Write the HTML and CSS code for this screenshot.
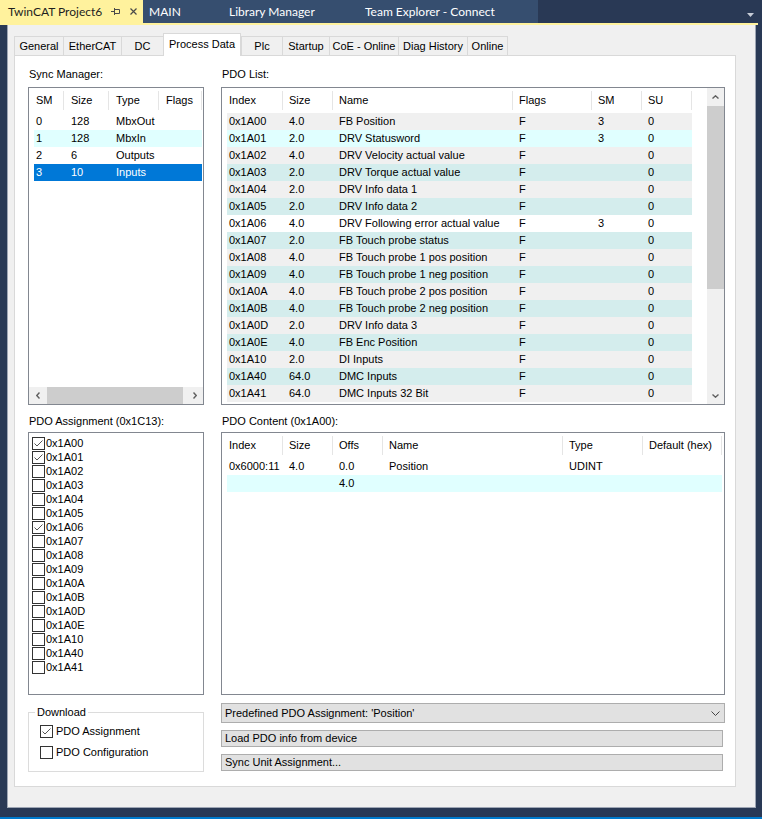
FILE: index.html
```html
<!DOCTYPE html>
<html>
<head>
<meta charset="utf-8">
<title>TwinCAT Project6</title>
<link rel="stylesheet" href="styles.css">
</head>
<body>
<div class="app">
  <div class="doctabs">
    <div class="dtab dtab-active">
      <span class="dtab-title">TwinCAT Project6</span>
      <svg class="pin" width="9" height="7" viewBox="0 0 9 7"><path d="M0 3.5H3M3.5 0V7M4 1.5H8.5V5.5H4" fill="none" stroke="#4a4a4a" stroke-width="1"/></svg>
      <svg class="close" width="7" height="7" viewBox="0 0 7 7"><path d="M0.5 0.5L6.5 6.5M6.5 0.5L0.5 6.5" fill="none" stroke="#4a4a4a" stroke-width="1.2"/></svg>
    </div>
    <div class="dtab dtab-main">MAIN</div>
    <div class="dtab dtab-lib">Library Manager</div>
    <div class="dtab dtab-team">Team Explorer - Connect</div>
    <div class="dtab-fill"></div>
    <svg class="dtab-menu" width="7" height="4" viewBox="0 0 7 4"><path d="M0 0H7L3.5 4Z" fill="#c6ccd6"/></svg>
  </div>
  <div class="docline"></div>
  <div class="frame">
    <div class="tabs">
      <div class="tab t-general">General</div>
      <div class="tab t-ethercat">EtherCAT</div>
      <div class="tab t-dc">DC</div>
      <div class="tab tab-active t-process">Process Data</div>
      <div class="tab t-plc">Plc</div>
      <div class="tab t-startup">Startup</div>
      <div class="tab t-coe">CoE - Online</div>
      <div class="tab t-diag">Diag History</div>
      <div class="tab tab-last t-online">Online</div>
    </div>
    <div class="panel">
      <div class="col col-left">
        <div class="lbl">Sync Manager:</div>
        <div class="box box-top box-col">
          <div class="lv sync">
            <div class="hdr g-sync">
              <span class="hc">SM</span><span class="hc">Size</span><span class="hc">Type</span><span class="hc">Flags</span>
            </div>
            <div class="row g-sync"><span>0</span><span>128</span><span>MbxOut</span><span></span></div>
            <div class="row g-sync r-cyan"><span>1</span><span>128</span><span>MbxIn</span><span></span></div>
            <div class="row g-sync"><span>2</span><span>6</span><span>Outputs</span><span></span></div>
            <div class="row g-sync r-sel"><span>3</span><span>10</span><span>Inputs</span><span></span></div>
          </div>
          <div class="hscroll">
            <div class="sb-btn"><svg width="4" height="7" viewBox="0 0 4 7"><path d="M3.5 0.5L0.8 3.5L3.5 6.5" fill="none" stroke="#606060" stroke-width="1.4"/></svg></div>
            <div class="hthumb"></div>
            <div class="sb-track"></div>
            <div class="sb-btn"><svg width="4" height="7" viewBox="0 0 4 7"><path d="M0.5 0.5L3.2 3.5L0.5 6.5" fill="none" stroke="#606060" stroke-width="1.4"/></svg></div>
          </div>
        </div>

        <div class="lbl lbl2">PDO Assignment (0x1C13):</div>
        <div class="box box-bot chk-list">
          <div class="ci"><span class="cb"><svg width="11" height="11" viewBox="0 0 11 11"><path d="M1.5 5.5L4 8L9.5 2.5" fill="none" stroke="#555" stroke-width="1"/></svg></span>0x1A00</div>
          <div class="ci"><span class="cb"><svg width="11" height="11" viewBox="0 0 11 11"><path d="M1.5 5.5L4 8L9.5 2.5" fill="none" stroke="#555" stroke-width="1"/></svg></span>0x1A01</div>
          <div class="ci"><span class="cb"></span>0x1A02</div>
          <div class="ci"><span class="cb"></span>0x1A03</div>
          <div class="ci"><span class="cb"></span>0x1A04</div>
          <div class="ci"><span class="cb"></span>0x1A05</div>
          <div class="ci"><span class="cb"><svg width="11" height="11" viewBox="0 0 11 11"><path d="M1.5 5.5L4 8L9.5 2.5" fill="none" stroke="#555" stroke-width="1"/></svg></span>0x1A06</div>
          <div class="ci"><span class="cb"></span>0x1A07</div>
          <div class="ci"><span class="cb"></span>0x1A08</div>
          <div class="ci"><span class="cb"></span>0x1A09</div>
          <div class="ci"><span class="cb"></span>0x1A0A</div>
          <div class="ci"><span class="cb"></span>0x1A0B</div>
          <div class="ci"><span class="cb"></span>0x1A0D</div>
          <div class="ci"><span class="cb"></span>0x1A0E</div>
          <div class="ci"><span class="cb"></span>0x1A10</div>
          <div class="ci"><span class="cb"></span>0x1A40</div>
          <div class="ci"><span class="cb"></span>0x1A41</div>
        </div>

        <fieldset class="grp">
          <legend>Download</legend>
          <div class="gopt gopt1"><span class="cb"><svg width="11" height="11" viewBox="0 0 11 11"><path d="M1.5 5.5L4 8L9.5 2.5" fill="none" stroke="#555" stroke-width="1"/></svg></span>PDO Assignment</div>
          <div class="gopt gopt2"><span class="cb"></span>PDO Configuration</div>
        </fieldset>
      </div>

      <div class="col col-right">
        <div class="lbl">PDO List:</div>
        <div class="box box-top box-row">
          <div class="lv">
            <div class="hdr g-pdo">
              <span class="hc">Index</span><span class="hc">Size</span><span class="hc">Name</span><span class="hc">Flags</span><span class="hc">SM</span><span class="hc">SU</span>
            </div>
            <div class="row g-pdo r-gray"><span>0x1A00</span><span>4.0</span><span>FB Position</span><span>F</span><span>3</span><span>0</span></div>
            <div class="row g-pdo r-cyan"><span>0x1A01</span><span>2.0</span><span>DRV Statusword</span><span>F</span><span>3</span><span>0</span></div>
            <div class="row g-pdo r-gray"><span>0x1A02</span><span>4.0</span><span>DRV Velocity actual value</span><span>F</span><span></span><span>0</span></div>
            <div class="row g-pdo r-teal"><span>0x1A03</span><span>2.0</span><span>DRV Torque actual value</span><span>F</span><span></span><span>0</span></div>
            <div class="row g-pdo r-gray"><span>0x1A04</span><span>2.0</span><span>DRV Info data 1</span><span>F</span><span></span><span>0</span></div>
            <div class="row g-pdo r-teal"><span>0x1A05</span><span>2.0</span><span>DRV Info data 2</span><span>F</span><span></span><span>0</span></div>
            <div class="row g-pdo r-white"><span>0x1A06</span><span>4.0</span><span>DRV Following error actual value</span><span>F</span><span>3</span><span>0</span></div>
            <div class="row g-pdo r-teal"><span>0x1A07</span><span>2.0</span><span>FB Touch probe status</span><span>F</span><span></span><span>0</span></div>
            <div class="row g-pdo r-gray"><span>0x1A08</span><span>4.0</span><span>FB Touch probe 1 pos position</span><span>F</span><span></span><span>0</span></div>
            <div class="row g-pdo r-teal"><span>0x1A09</span><span>4.0</span><span>FB Touch probe 1 neg position</span><span>F</span><span></span><span>0</span></div>
            <div class="row g-pdo r-gray"><span>0x1A0A</span><span>4.0</span><span>FB Touch probe 2 pos position</span><span>F</span><span></span><span>0</span></div>
            <div class="row g-pdo r-teal"><span>0x1A0B</span><span>4.0</span><span>FB Touch probe 2 neg position</span><span>F</span><span></span><span>0</span></div>
            <div class="row g-pdo r-gray"><span>0x1A0D</span><span>2.0</span><span>DRV Info data 3</span><span>F</span><span></span><span>0</span></div>
            <div class="row g-pdo r-teal"><span>0x1A0E</span><span>4.0</span><span>FB Enc Position</span><span>F</span><span></span><span>0</span></div>
            <div class="row g-pdo r-gray"><span>0x1A10</span><span>2.0</span><span>DI Inputs</span><span>F</span><span></span><span>0</span></div>
            <div class="row g-pdo r-teal"><span>0x1A40</span><span>64.0</span><span>DMC Inputs</span><span>F</span><span></span><span>0</span></div>
            <div class="row g-pdo r-gray"><span>0x1A41</span><span>64.0</span><span>DMC Inputs 32 Bit</span><span>F</span><span></span><span>0</span></div>
          </div>
          <div class="vscroll">
            <div class="sb-btn"><svg width="7" height="4" viewBox="0 0 7 4"><path d="M0.5 3.5L3.5 0.8L6.5 3.5" fill="none" stroke="#606060" stroke-width="1.4"/></svg></div>
            <div class="vthumb"></div>
            <div class="sb-track"></div>
            <div class="sb-btn"><svg width="7" height="4" viewBox="0 0 7 4"><path d="M0.5 0.5L3.5 3.2L6.5 0.5" fill="none" stroke="#606060" stroke-width="1.4"/></svg></div>
          </div>
        </div>

        <div class="lbl lbl2">PDO Content (0x1A00):</div>
        <div class="box box-bot">
          <div class="lv">
            <div class="hdr g-cont">
              <span class="hc">Index</span><span class="hc">Size</span><span class="hc">Offs</span><span class="hc">Name</span><span class="hc">Type</span><span class="hc">Default (hex)</span>
            </div>
            <div class="row g-cont"><span>0x6000:11</span><span>4.0</span><span>0.0</span><span>Position</span><span>UDINT</span><span></span></div>
            <div class="row g-cont r-cyan"><span></span><span></span><span>4.0</span><span></span><span></span><span></span></div>
          </div>
        </div>

        <div class="dd">
          <span>Predefined PDO Assignment: 'Position'</span>
          <svg width="9" height="5" viewBox="0 0 9 5"><path d="M0.5 0.5L4.5 4.5L8.5 0.5" fill="none" stroke="#444" stroke-width="1"/></svg>
        </div>
        <div class="btn">Load PDO info from device</div>
        <div class="btn">Sync Unit Assignment...</div>
      </div>
    </div>
  </div>
  <div class="statusline"></div>
</div>
</body>
</html>
```

FILE: styles.css
```css
* { box-sizing: border-box; }
html, body { margin: 0; padding: 0; }
body {
  width: 762px;
  height: 819px;
  overflow: hidden;
  background: #293955;
  font-family: "Liberation Sans", Arial, sans-serif;
  font-size: 11px;
  color: #000;
}
.app { display: flex; flex-direction: column; height: 819px; }

/* document tabs */
.doctabs { display: flex; height: 23px; flex: none; }
.dtab {
  display: flex;
  align-items: center;
  height: 23px;
  padding-left: 6px;
  font-family: Lato, "Noto Sans", sans-serif;
  font-size: 12px;
  color: #fff;
  background: #364e6f;
  white-space: nowrap;
}
.dtab-active { width: 143px; background: #fff29d; color: #1e1e1e; padding: 0 6px 0 8px; }
.dtab-title { flex: 1; }
.pin { margin-right: 10px; }
.dtab-main { width: 80px; }
.dtab-lib { width: 136px; }
.dtab-team { width: 179px; }
.dtab-fill { flex: 1; }
.dtab-menu { margin: 13px 8px 0 0; }
.docline { height: 2px; background: #fff29d; margin-right: 4px; flex: none; }

/* frame */
.frame {
  flex: none;
  margin-left: 7px;
  width: 749px;
  height: 783px;
  background: #f0f0f0;
  border-left: 1px solid #9ea6b4;
  border-right: 1px solid #9ea6b4;
  border-bottom: 1px solid #9ea6b4;
  padding: 8px 0 0 6px;
}
.statusline { margin-top: auto; height: 2px; background: #007acc; flex: none; }

/* tab control */
.tabs { display: flex; align-items: flex-end; height: 22px; }
.tab {
  height: 19px;
  border: 1px solid #d9d9d9;
  border-right: none;
  border-bottom: none;
  background: #f0f0f0;
  text-align: center;
  line-height: 18px;
  white-space: nowrap;
}
.tab-active {
  height: 23px;
  margin-bottom: -1px;
  background: #fff;
  border-right: 1px solid #d9d9d9;
  line-height: 21px;
  position: relative;
  z-index: 1;
}
.tab-last { border-right: 1px solid #d9d9d9; }
.t-general { width: 49px; }
.t-ethercat { width: 58px; }
.t-dc { width: 42px; }
.t-process { width: 78px; }
.t-plc { width: 41px; }
.t-startup { width: 47px; }
.t-coe { width: 69px; }
.t-diag { width: 69px; }
.t-online { width: 41px; }

.panel {
  width: 722px;
  height: 732px;
  background: #fff;
  border: 1px solid #d9d9d9;
  display: flex;
  gap: 17px;
  padding: 11px 10px 0 13px;
}
.col { display: flex; flex-direction: column; }
.col-left { width: 176px; }
.col-right { width: 504px; }

.lbl { height: 14px; line-height: 14px; margin-bottom: 6px; padding-left: 1px; white-space: nowrap; }
.lbl2 { margin-top: 9px; margin-bottom: 4px; }

.box { border: 1px solid #828790; background: #fff; }
.box-top { height: 318px; }
.box-bot { height: 263px; }
.box-col { display: flex; flex-direction: column; }
.box-row { display: flex; }

/* list views */
.lv { flex: 1; padding-left: 5px; overflow: hidden; }
.hdr { display: grid; height: 25px; align-items: center; }
.hc {
  height: 19px;
  line-height: 19px;
  padding-left: 6px;
  border-right: 1px solid #e5e5e5;
  white-space: nowrap;
  overflow: hidden;
}
.hc:first-child { padding-left: 2px; }
.row { display: grid; height: 17px; line-height: 17px; }
.row > span { padding-left: 6px; white-space: nowrap; overflow: hidden; }
.row > span:first-child { padding-left: 2px; }
.sync .hc, .sync .row > span { padding-left: 7px; }
.sync .hc:first-child, .sync .row > span:first-child { padding-left: 2px; }

.g-sync { grid-template-columns: 30px 45px 50px 43px; width: 168px; }
.g-pdo { grid-template-columns: 56px 50px 180px 79px 50px 50px; width: 465px; }
.g-cont { grid-template-columns: 56px 50px 50px 180px 80px 79px; width: 495px; }

.r-gray { background: #f0f0f0; }
.r-teal { background: #d4eded; }
.r-cyan { background: #e0ffff; }
.r-white { background: #fff; }
.r-sel { background: #0078d7; color: #fff; }

/* scrollbars */
.vscroll { width: 17px; display: flex; flex-direction: column; background: #f0f0f0; flex: none; }
.hscroll { height: 17px; display: flex; background: #f0f0f0; flex: none; }
.sb-btn { width: 17px; height: 17px; display: flex; align-items: center; justify-content: center; flex: none; }
.sb-track { flex: 1; }
.vthumb { height: 183px; margin-top: 1px; background: #cdcdcd; flex: none; }
.hthumb { width: 136px; margin-left: 1px; background: #cdcdcd; flex: none; }

/* checkbox list */
.chk-list { padding: 3px 0 0 3px; }
.ci { display: flex; align-items: center; height: 14px; white-space: nowrap; }
.cb {
  width: 13px;
  height: 13px;
  border: 1px solid #333;
  background: #fff;
  margin-right: 1px;
  display: flex;
  flex: none;
}

/* group box */
.grp {
  margin: 10px 0 0 0;
  padding: 0 6px;
  border: 1px solid #dcdcdc;
  height: 67px;
  min-width: 0;
}
.grp legend { padding: 0 2px; line-height: 14px; }
.gopt { display: flex; align-items: center; height: 14px; margin-left: 5px; white-space: nowrap; }
.gopt .cb { margin-right: 3px; }
.gopt1 { margin-top: 5px; }
.gopt2 { margin-top: 7px; }

/* buttons */
.dd {
  margin-top: 8px;
  height: 20px;
  width: 504px;
  border: 1px solid #adadad;
  background: #e1e1e1;
  display: flex;
  align-items: center;
  justify-content: space-between;
  padding: 0 4px 0 3px;
  flex: none;
}
.btn {
  margin-top: 7px;
  height: 17px;
  width: 502px;
  border: 1px solid #adadad;
  background: #e1e1e1;
  line-height: 15px;
  padding-left: 3px;
  flex: none;
}
```
